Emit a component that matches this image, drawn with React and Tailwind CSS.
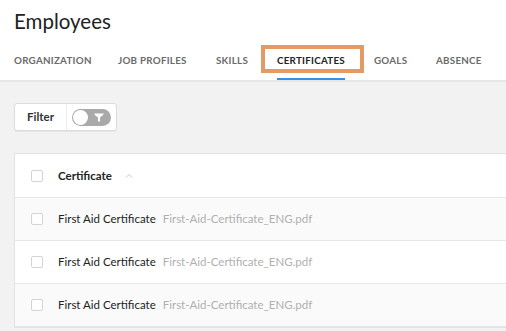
import React from 'react';

const tabs = [
  { label: 'ORGANIZATION', w: 'w-[104px]' },
  { label: 'JOB PROFILES', w: 'w-[98px]' },
  { label: 'SKILLS', w: 'w-[61px]' },
  { label: 'CERTIFICATES', w: 'w-[97px]', active: true },
  { label: 'GOALS', w: 'w-[62px]' },
  { label: 'ABSENCE', w: 'w-[60px]' },
];
const rows = [
  { name: 'First Aid Certificate', file: 'First-Aid-Certificate_ENG.pdf' },
  { name: 'First Aid Certificate', file: 'First-Aid-Certificate_ENG.pdf' },
  { name: 'First Aid Certificate', file: 'First-Aid-Certificate_ENG.pdf' },
];

const Checkbox = () => (
  <span className="block w-3 h-3 rounded-[2px] border border-[#d4d4d4] bg-white shrink-0" />
);

const FunnelIcon = () => (
  <svg width="10" height="9" viewBox="0 0 10 9" fill="white">
    <path d="M0.3 0.6C0.3 0.3 9.7 0.3 9.7 0.6C9.7 2.4 6 4.2 6 4.6V8.6H4V4.6C4 4.2 0.3 2.4 0.3 0.6z" />
  </svg>
);

export default function App() {
  return (
    <div className="w-[506px] h-[331px] overflow-hidden bg-[#f2f2f2] font-['Lato',sans-serif]">
      {/* Header */}
      <div className="bg-white border-b-2 border-[#e6e6e6]">
        <h1 className="pl-[14px] pt-[8px] text-[20.5px] leading-[26px] text-[#222] font-normal">Employees</h1>
        <nav className="flex pl-[14px] mt-[12px]">
          {tabs.map((t) => (
            <div key={t.label} className={`relative shrink-0 ${t.w}`}>
              <div className="relative inline-block">
                <div
                  className={`h-[33px] pt-[6px] text-[9.8px] font-bold tracking-[0.25px] ${
                    t.active ? 'text-[#222]' : 'text-[#6b6b6b]'
                  }`}
                >
                  {t.label}
                </div>
                {t.active && <span className="absolute left-0 right-0 bottom-0 h-[2px] bg-[#3b8ee8]" />}
              </div>
              {t.active && (
                <span className="absolute left-[-16px] top-[-1px] w-[103px] h-[28px] border-[4px] border-[#e49a62]" />
              )}
            </div>
          ))}
        </nav>
      </div>

      {/* Filter */}
      <div className="pl-[14px] pt-[21px]">
        <div className="inline-flex items-stretch h-[28px] bg-white border border-[#dcdcdc] rounded-[3px] shadow-[0_1px_1px_rgba(0,0,0,0.05)]">
          <span className="flex items-center px-[12px] text-[11.5px] font-bold text-[#333] border-r border-[#ececec]">Filter</span>
          <span className="flex items-center px-[5px]">
            <span className="flex items-center w-[39px] h-[17px] rounded-full bg-[#a9a9a9] p-[1px]">
              <span className="w-[15px] h-[15px] rounded-full bg-white" />
              <span className="flex-1 flex justify-center">
                <FunnelIcon />
              </span>
            </span>
          </span>
        </div>
      </div>

      {/* Table */}
      <div className="ml-[14px] mt-[22px] bg-white border border-[#e3e3e3] border-r-0">
        <div className="flex items-center h-[44px] pl-[16px] border-b border-[#e6e6e6]">
          <Checkbox />
          <span className="ml-[15px] text-[11.5px] font-bold text-[#222]">Certificate</span>
          <svg className="ml-[13px]" width="8" height="5" viewBox="0 0 8 5" fill="none" stroke="#c8c8c8" strokeWidth="1">
            <path d="M1 4.5L4 1.5L7 4.5" />
          </svg>
        </div>
        {rows.map((r, i) => (
          <div
            key={i}
            className={`flex items-center h-[43px] pl-[16px] border-b border-[#e6e6e6] ${
              i % 2 === 0 ? 'bg-[#fafafa]' : 'bg-white'
            }`}
          >
            <Checkbox />
            <span className="ml-[15px] text-[11.5px] text-[#222]">{r.name}</span>
            <span className="ml-[7px] text-[11.5px] text-[#b0b0b0]">{r.file}</span>
          </div>
        ))}
      </div>
    </div>
  );
}
